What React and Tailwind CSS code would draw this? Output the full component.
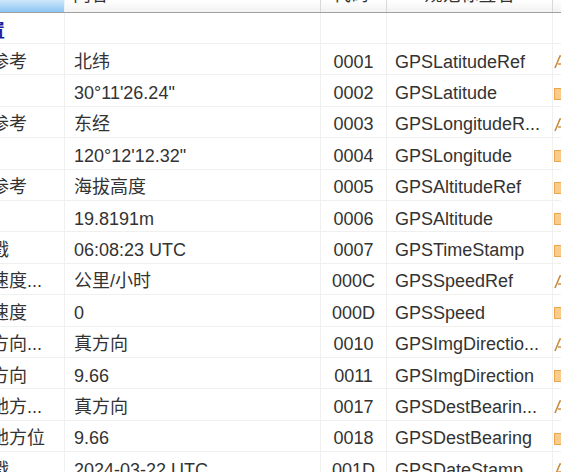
import React from 'react';

// names/tags are shown already shortened, the way the list view clips them
const rows = [
  { name: '纬度参考', value: '北纬', code: '0001', tag: 'GPSLatitudeRef', type: 'A' },
  { name: '纬度', value: '30°11\'26.24"', code: '0002', tag: 'GPSLatitude', type: 'R' },
  { name: '经度参考', value: '东经', code: '0003', tag: 'GPSLongitudeR...', type: 'A' },
  { name: '经度', value: '120°12\'12.32"', code: '0004', tag: 'GPSLongitude', type: 'R' },
  { name: '海拔参考', value: '海拔高度', code: '0005', tag: 'GPSAltitudeRef', type: 'R' },
  { name: '海拔', value: '19.8191m', code: '0006', tag: 'GPSAltitude', type: 'R' },
  { name: '时间戳', value: '06:08:23 UTC', code: '0007', tag: 'GPSTimeStamp', type: 'R' },
  { name: '移动速度...', value: '公里/小时', code: '000C', tag: 'GPSSpeedRef', type: 'A' },
  { name: '移动速度', value: '0', code: '000D', tag: 'GPSSpeed', type: 'R' },
  { name: '图像方向...', value: '真方向', code: '0010', tag: 'GPSImgDirectio...', type: 'A' },
  { name: '图像方向', value: '9.66', code: '0011', tag: 'GPSImgDirection', type: 'R' },
  { name: '目的地方...', value: '真方向', code: '0017', tag: 'GPSDestBearin...', type: 'A' },
  { name: '目的地方位', value: '9.66', code: '0018', tag: 'GPSDestBearing', type: 'R' },
  { name: '日期戳', value: '2024-03-22 UTC', code: '001D', tag: 'GPSDateStamp', type: 'A' },
];

// small type marker in the last (mostly scrolled-off) column
const TypeIcon = ({ type }) =>
  type === 'A' ? (
    <svg width="14" height="14" viewBox="0 0 14 14">
      <path d="M1 13 L6 1 L8 1 L13 13" fill="none" stroke="#c98b3e" strokeWidth="1.6" />
      <path d="M4 9 L10 9" stroke="#c98b3e" strokeWidth="1.4" />
    </svg>
  ) : (
    <svg width="14" height="14" viewBox="0 0 14 14">
      <rect x="0.5" y="1.5" width="12" height="11" fill="#f9cc8c" stroke="#eda64a" />
    </svg>
  );

const cell = 'flex items-center pt-[6px] border-r border-[#f0f0f0] overflow-hidden whitespace-nowrap';

export default function App() {
  return (
    <div className="w-[561px] h-[472px] overflow-hidden bg-white text-[18px] text-[#333] font-['Liberation_Sans','Noto_Sans_CJK_SC',sans-serif]">
      <div className="-ml-[51px] w-[720px]">
        {/* header, mostly scrolled off the top */}
        <div className="flex h-[13px] border-b border-[#a0a0a0]">
          <div className="w-[116px] h-full border-r border-[#e8f2fb] bg-linear-to-b from-[#cfe7fb] to-[#8cc6f2]" />
          <div className="w-[256px] h-full overflow-hidden border-r border-[#d9d9d9] bg-linear-to-b from-white to-[#f2f2f2] pl-[8px]">
            <div className="-mt-[14px] leading-[18px]">内容</div>
          </div>
          <div className="w-[66px] h-full overflow-hidden border-r border-[#d9d9d9] bg-linear-to-b from-white to-[#f2f2f2] pl-[12px]">
            <div className="-mt-[14px] leading-[18px]">代码</div>
          </div>
          <div className="w-[166px] h-full overflow-hidden border-r border-[#d9d9d9] bg-linear-to-b from-white to-[#f2f2f2] flex justify-center">
            <div className="-mt-[14px] leading-[18px]">规范标签名</div>
          </div>
          <div className="flex-1 h-full bg-linear-to-b from-white to-[#f2f2f2]" />
        </div>

        {/* group row */}
        <div className="flex h-[31px] border-b border-[#f0f0f0]">
          <div className={`${cell} w-[116px] pl-[20px] font-bold text-[#1c1ca3]`}>位置</div>
          <div className={`${cell} w-[256px]`} />
          <div className={`${cell} w-[66px]`} />
          <div className={`${cell} w-[166px]`} />
          <div className="flex-1" />
        </div>

        {rows.map((r) => (
          <div key={r.code} className="flex h-[31.4px] border-b border-[#f0f0f0]">
            <div className={`${cell} w-[116px] pl-[6px]`}>{r.name}</div>
            <div className={`${cell} w-[256px] pl-[9px]`}>{r.value}</div>
            <div className={`${cell} w-[66px] justify-center`}>{r.code}</div>
            <div className={`${cell} w-[166px] pl-[8px]`}>{r.tag}</div>
            <div className="flex-1 flex items-center pt-[6px] pl-[1px]">
              <TypeIcon type={r.type} />
            </div>
          </div>
        ))}
      </div>
    </div>
  );
}
